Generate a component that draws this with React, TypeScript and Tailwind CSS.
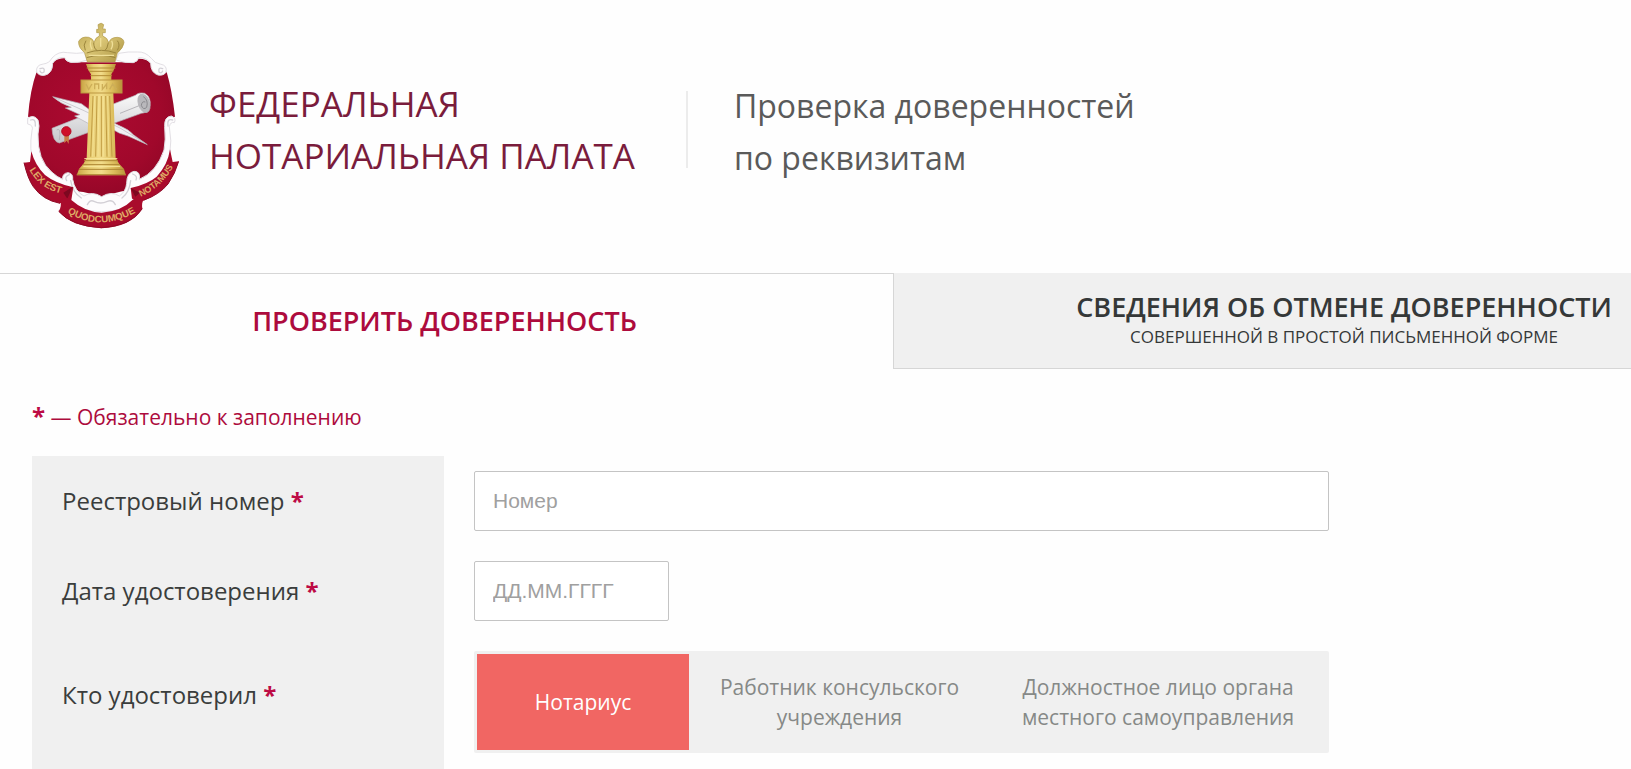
import React, { useState } from "react";

function Emblem() {
  return (
    <svg viewBox="39 36 468 621" className="h-[207px] w-[156px] shrink-0" role="img" aria-label="Герб Федеральной нотариальной палаты">
      <defs>
        <radialGradient id="shield" cx="0.45" cy="0.4" r="0.65">
          <stop offset="0" stopColor="#ad0a31" />
          <stop offset="0.7" stopColor="#a0082b" />
          <stop offset="1" stopColor="#900626" />
        </radialGradient>
        <linearGradient id="gold" x1="0" x2="1" y1="0" y2="0">
          <stop offset="0" stopColor="#c9a445" />
          <stop offset="0.25" stopColor="#e8cd72" />
          <stop offset="0.5" stopColor="#f2dc8a" />
          <stop offset="0.75" stopColor="#dcbd5c" />
          <stop offset="1" stopColor="#b8923a" />
        </linearGradient>
        <linearGradient id="crown" x1="0" x2="1" y1="0" y2="1">
          <stop offset="0" stopColor="#b6a04a" />
          <stop offset="0.45" stopColor="#dcc878" />
          <stop offset="1" stopColor="#ab9340" />
        </linearGradient>
        <linearGradient id="paper" x1="0" x2="0" y1="0" y2="1">
          <stop offset="0" stopColor="#fbfbfb" />
          <stop offset="1" stopColor="#c6c6ca" />
        </linearGradient>
        <path id="leftRibbon" d="M58 480 Q92 540 164 553" />
        <path id="bottomRibbon" d="M172 608 Q274 670 386 602" />
        <path id="rightRibbon" d="M392 560 Q457 532 494 462" />
      </defs>

      <path
        d="M80 185 Q90 200 106 190 Q130 180 126 160 Q140 145 165 144 Q170 160 190 157 L360 157 Q378 160 385 146 Q412 146 424 162 Q422 184 442 191 Q460 198 470 186 Q486 240 495 320 Q470 322 466 352 Q478 440 425 496 Q395 530 355 540 Q310 548 275 562 Q240 548 200 544 Q140 530 110 484 Q76 430 84 350 Q82 322 54 320 Q60 240 80 185Z"
        fill="url(#shield)"
      />

      <g fill="#fdfcfd" stroke="#e2dfe4" strokeWidth="3" strokeLinejoin="round" strokeLinecap="round">
        <path d="M80 186 Q76 165 100 162 Q118 160 126 144 Q146 122 172 128 Q202 132 222 128 L232 150 Q205 160 182 157 Q165 152 164 143 Q140 140 128 160 Q128 190 104 196 Q86 198 80 186Z" />
        <path d="M468 186 Q474 166 450 162 Q434 160 425 146 Q406 124 382 126 Q355 124 326 130 L318 150 Q345 160 370 158 Q384 154 386 143 Q410 142 422 160 Q422 188 444 195 Q462 198 468 186Z" />
        <path d="M54 324 Q72 312 84 330 Q90 345 84 372 Q82 450 125 486 Q142 502 158 508 Q156 490 174 488 Q190 490 188 508 Q194 544 222 558 Q246 542 275 560 Q304 542 328 558 Q348 544 350 520 Q350 488 372 484 Q392 484 388 508 Q440 486 462 420 Q468 390 464 350 Q462 320 484 318 Q500 324 493 338 Q482 334 478 350 Q494 440 452 490 Q420 528 388 546 Q372 582 330 598 Q274 612 220 598 Q176 580 160 546 Q98 520 72 462 Q56 420 66 362 Q72 346 54 342Z" />
      </g>
      <g fill="none" stroke="#d3d0d6" strokeWidth="4" strokeLinecap="round">
        <path d="M90 176 Q106 170 102 186 Q94 192 90 183" />
        <path d="M458 176 Q444 170 447 186 Q454 192 458 183" />
        <path d="M178 494 Q162 500 170 512 M182 512 Q188 548 214 564" />
        <path d="M368 492 Q384 498 378 510 M362 512 Q358 548 336 564" />
        <path d="M232 584 Q240 568 252 574 Q272 584 292 574 Q308 568 316 584" />
        <path d="M62 330 Q78 324 76 348 M488 330 Q470 324 474 348" />
      </g>

      <g stroke="#b3b1b6" strokeWidth="2" strokeLinejoin="round">
        <path d="M126 355 L376 256 Q386 246 404 250 Q424 262 420 286 Q412 310 394 310 L148 399 Q128 396 126 355Z" fill="url(#paper)" />
        <ellipse cx="402" cy="280" rx="17" ry="29" transform="rotate(-18 402 280)" fill="#b9b8bc" />
        <path d="M400 260 Q416 270 410 292 Q400 302 394 286 Q396 272 406 276" fill="none" stroke="#8a898e" strokeWidth="3" />
        <path d="M128 260 L214 281 L248 306 L326 346 Q356 358 370 374 L412 404 L354 378 Q328 372 304 356 L238 342 L194 318 L210 314 L166 294 L184 292 Q150 280 128 260Z" fill="#f2f1f4" />
        <path d="M134 263 L222 302 L330 354 L406 400" fill="none" stroke="#bab7bd" />
      </g>
      <path d="M140 360 Q154 350 148 390 M330 310 L390 286" fill="none" stroke="#b7b5ba" strokeWidth="3" />
      <path d="M163 376 L163 400 L170 392 L176 402 L177 374" fill="#ca7d46" />
      <circle cx="169" cy="364" r="14" fill="#cf1029" stroke="#b50d27" strokeWidth="3" />

      <path d="M200 496 L207 477 L220 462 L230 444 L238 248 L310 248 L317 444 L328 462 L342 477 L348 496Z" fill="url(#gold)" />
      <g stroke="#c19c42" strokeWidth="3">
        <path d="M249 258 L242 440 M261 258 L257 440 M274 258 L274 440 M287 258 L291 440 M299 258 L306 440" />
      </g>
      <g stroke="#f8e79c" strokeWidth="2">
        <path d="M254 258 L248 440 M267 258 L264 440 M280 258 L281 440 M293 258 L297 440" />
      </g>
      <path d="M222 452 H324 M218 464 H330 M207 478 H342 M200 494 H348" stroke="#ac8532" strokeWidth="3" />
      <path d="M223 446 H322 M220 469 H330" stroke="#f8e79c" strokeWidth="3" />
      <path d="M228 162 H318 L311 181 L304 193 V210 H243 V193 L235 181Z" fill="url(#gold)" />
      <path d="M230 174 H316 M237 184 H310 M241 197 H306" stroke="#b28b34" strokeWidth="3" />
      <rect x="213" y="210" width="123" height="39" fill="url(#gold)" stroke="#bc9640" strokeWidth="3" />
      <path d="M228 222 L236 238 L246 222 M254 238 V222 H266 V238 M277 222 V238 L290 222 V238 M299 238 L308 222 L320 238" fill="none" stroke="#cdae58" strokeWidth="4" />
      <path
        d="M232 156 L224 128 Q204 112 206 94 Q215 78 236 82 Q250 86 252 98 Q256 82 268 78 V68 H260 V58 H266 L264 44 Q274 35 281 44 L278 57 H286 V68 H278 V78 Q293 83 296 98 Q302 82 322 82 Q342 84 342 98 Q340 114 322 129 L315 156Z"
        fill="url(#crown)"
        stroke="#b09848"
        strokeWidth="2"
        strokeLinejoin="round"
      />
      <path d="M230 129 Q274 113 318 129 M230 143 Q274 129 316 143 M251 98 Q252 118 262 122 M295 98 Q292 118 284 122 M226 121 Q218 104 228 92 M322 121 Q332 104 322 92" fill="none" stroke="#9c863c" strokeWidth="3" />
      <path d="M236 136 H312 M272 84 V110 M243 91 Q238 104 246 118 M305 92 Q311 105 303 118" fill="none" stroke="#efdf98" strokeWidth="4" />

      <path d="M64 424 Q75 466 105 495 Q136 520 190 532 L184 570 L150 580 Q98 570 70 530 Q54 508 42 458 L60 456Z" fill="#a90b2c" />
      <path d="M480 418 Q474 464 440 500 Q414 522 362 534 L366 566 L400 572 Q448 554 474 522 Q496 490 506 454 L488 456Z" fill="#a90b2c" />
      <path d="M188 530 L172 566 L160 548Z M362 534 L376 560 L390 548Z" fill="#7d0820" />
      <path d="M151 570 Q172 558 184 570 Q224 606 275 608 Q332 606 370 568 Q386 558 401 570 Q394 578 397 596 Q364 650 274 655 Q184 650 146 604 Q156 590 151 570Z" fill="#a90b2c" />
      <path d="M42 458 Q54 508 70 530 Q98 570 150 580 M506 454 Q496 490 474 522 Q448 554 402 570 M146 604 Q184 648 274 653 Q364 648 397 596" fill="none" stroke="#8f0a26" strokeWidth="3" />

      <g fill="#dfac66" fontFamily="'Liberation Sans', Arial, sans-serif" fontWeight="700" fontSize="29">
        <text>
          <textPath href="#leftRibbon">LEX EST</textPath>
        </text>
        <text>
          <textPath href="#bottomRibbon">QUODCUMQUE</textPath>
        </text>
        <text fontSize="27">
          <textPath href="#rightRibbon">NOTAMUS</textPath>
        </text>
      </g>
    </svg>
  );
}

function Required() {
  return <span className="font-bold text-[#bd0b45]">*</span>;
}

const certifiers = ["Нотариус", "Работник консульского учреждения", "Должностное лицо органа местного самоуправления"];

const labelCell = "flex items-center bg-[#f0f0f0] pl-[30px] text-2xl text-[#3a3d3c]";
const fieldCell = "py-[15px] pl-[30px]";
const inputBox =
  "block h-[60px] rounded-xs border border-[#c4c4c4] bg-white px-[18px] font-['Liberation_Sans',Arial,sans-serif] text-[21px] text-[#3a3d3c] outline-none placeholder:text-[#a0a0a0]";

export default function App() {
  const [certifier, setCertifier] = useState(0);

  return (
    <div className="min-h-screen overflow-hidden bg-[#fefefe] font-['Open_Sans','Noto_Sans',sans-serif]">
      <header className="flex items-start pt-[22px] pb-11 pl-[23px]">
        <Emblem />
        <h1 className="mt-14 ml-[30px] text-[35px]/[52px] text-[#7a1c3c]">
          ФЕДЕРАЛЬНАЯ
          <br />
          НОТАРИАЛЬНАЯ ПАЛАТА
        </h1>
        <div className="mt-[69px] ml-[51px] h-[77px] w-[2px] bg-[#ececec]" />
        <p className="mt-[58px] ml-[46px] text-[32px]/[52px] text-[#5a5a5a]">
          Проверка доверенностей
          <br />
          по реквизитам
        </p>
      </header>

      <nav className="grid h-24 w-[110%] grid-cols-[893fr_901fr]">
        <button type="button" className="border-t border-[#d6d6d6] pr-1 text-[27px] font-semibold text-[#ad0b3d]">
          ПРОВЕРИТЬ ДОВЕРЕННОСТЬ
        </button>
        <button type="button" className="flex flex-col items-center justify-center border-b border-l border-[#d6d6d6] bg-[#f0f0f0] text-[#353838]">
          <span className="text-[27px]/[32px] font-semibold">СВЕДЕНИЯ ОБ ОТМЕНЕ ДОВЕРЕННОСТИ</span>
          <span className="text-[17px]/[28px] font-medium">СОВЕРШЕННОЙ В ПРОСТОЙ ПИСЬМЕННОЙ ФОРМЕ</span>
        </button>
      </nav>

      <form className="px-8 pt-8">
        <p className="mb-6 text-[21px]/[30px] text-[#ad0b3d]">
          <span className="text-2xl/[30px]">
            <Required />
          </span>{" "}
          — Обязательно к заполнению
        </p>

        <div className="grid max-w-[1297px] grid-cols-[412px_1fr]">
          <label htmlFor="registry-number" className={labelCell}>
            <span>
              Реестровый номер <Required />
            </span>
          </label>
          <div className={fieldCell}>
            <input id="registry-number" type="text" placeholder="Номер" className={`${inputBox} w-full`} />
          </div>

          <label htmlFor="certified-date" className={labelCell}>
            <span>
              Дата удостоверения <Required />
            </span>
          </label>
          <div className={fieldCell}>
            <input id="certified-date" type="text" placeholder="ДД.ММ.ГГГГ" className={`${inputBox} w-[195px]`} />
          </div>

          <div id="certifier-label" className={`${labelCell} pb-4`}>
            <span>
              Кто удостоверил <Required />
            </span>
          </div>
          <div className="pt-[15px] pb-4 pl-[30px]">
            <div
              role="group"
              aria-labelledby="certifier-label"
              className="grid h-[102px] grid-cols-[212fr_301fr_336fr] rounded-xs bg-[#f0f0f0] p-[3px]"
            >
              {certifiers.map((name, index) => (
                <button
                  key={name}
                  type="button"
                  aria-pressed={certifier === index}
                  onClick={() => setCertifier(index)}
                  className={`px-6 text-[21px]/[30px] ${certifier === index ? "bg-[#f16663] font-medium text-white" : "text-[#868987]"}`}
                >
                  {name}
                </button>
              ))}
            </div>
          </div>
        </div>
      </form>
    </div>
  );
}
